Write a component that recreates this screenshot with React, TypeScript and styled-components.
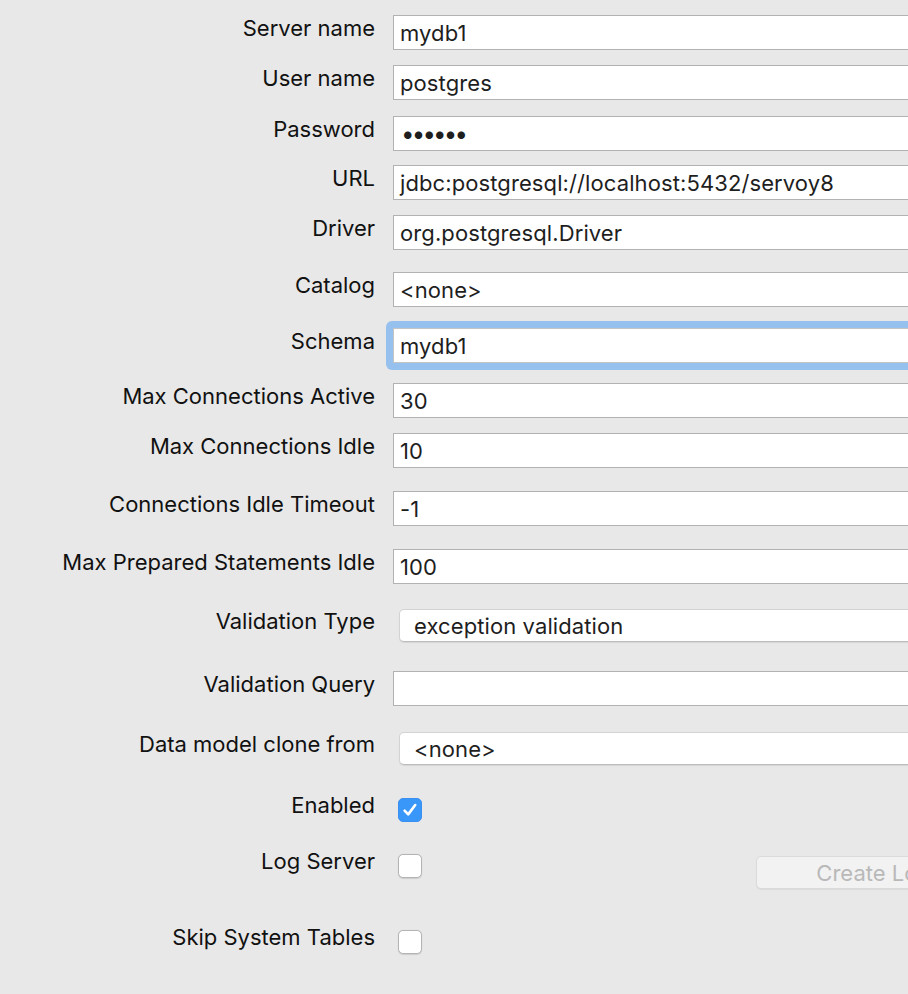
import React from 'react';
import styled, { createGlobalStyle } from 'styled-components';

const GlobalStyle = createGlobalStyle`
  html, body {
    margin: 0;
    padding: 0;
    background: #e8e8e8;
    overflow: hidden;
  }
  body {
    font-family: Inter, "Liberation Sans", Arial, sans-serif;
  }
`;

const Page = styled.div`
  width: 908px;
  height: 994px;
  overflow: hidden;
  background: #e8e8e8;
`;

const Form = styled.div`
  display: flex;
  flex-direction: column;
  padding-top: 15px;
`;

const Row = styled.div<{ $mt: number }>`
  display: grid;
  grid-template-columns: 375px 1fr;
  column-gap: 18px;
  align-items: center;
  margin-top: ${p => p.$mt}px;
`;

// labels sit a few pixels above the centre of their control
const Label = styled.div`
  text-align: right;
  font-size: 22px;
  line-height: 24px;
  color: #111;
  white-space: nowrap;
  margin-top: -5px;
  margin-bottom: 5px;
`;

const TextField = styled.div<{ $focused?: boolean }>`
  position: relative;
  width: 640px;
  height: 35px;
  box-sizing: border-box;
  background: #fff;
  border: 1px solid ${p => (p.$focused ? '#c4c4c4' : '#b2b2b2')};
  display: flex;
  align-items: center;
  padding-left: 6px;
  font-size: 22px;
  color: #1e1e1e;
  white-space: nowrap;
  letter-spacing: 0.1px;

  ${p =>
    p.$focused &&
    `
    &::before {
      content: '';
      position: absolute;
      inset: -8px;
      border-radius: 6px;
      background: #96c0ee;
      z-index: -1;
    }
  `}
`;

const FocusWrap = styled.div`
  position: relative;
  z-index: 0;
`;

const Dots = styled.span`
  font-size: 24px;
  letter-spacing: -2.8px;
  padding-left: 1px;
`;

const Combo = styled.div`
  width: 620px;
  height: 33px;
  margin-left: 6px;
  box-sizing: border-box;
  background: #fff;
  border: 1px solid #d3d3d3;
  border-bottom-color: #bcbcbc;
  border-radius: 5px;
  box-shadow: 0 1px 1px rgba(0, 0, 0, 0.08);
  display: flex;
  align-items: center;
  padding-left: 14px;
  font-size: 22px;
  color: #1e1e1e;
  white-space: nowrap;
  letter-spacing: 0.1px;
`;

const CheckCell = styled.div`
  height: 24px;
  display: flex;
  align-items: flex-start;
`;

const Checkbox = styled.div<{ $checked?: boolean }>`
  width: 24px;
  height: 24px;
  margin-left: 5px;
  box-sizing: border-box;
  border-radius: 5px;
  flex-shrink: 0;
  display: flex;
  align-items: center;
  justify-content: center;
  background: ${p => (p.$checked ? '#3a97fa' : '#fff')};
  border: 1px solid ${p => (p.$checked ? '#3a8ff0' : '#b4b4b4')};
  box-shadow: ${p => (p.$checked ? 'none' : '0 0.5px 1px rgba(0,0,0,0.12)')};
`;

const Button = styled.div`
  margin-left: 334px;
  margin-top: 2px;
  width: 298px;
  height: 33px;
  flex-shrink: 0;
  box-sizing: border-box;
  border-radius: 5px;
  background: #f2f2f2;
  border: 1px solid #dadada;
  box-shadow: 0 1px 1px rgba(0, 0, 0, 0.06);
  display: flex;
  align-items: center;
  justify-content: center;
  font-size: 22px;
  color: #b9b9b9;
  white-space: nowrap;
`;

const Check = () => (
  <svg width="18" height="18" viewBox="0 0 18 18">
    <path
      d="M3.6 9.6 L7.2 13.4 L14.2 4"
      fill="none"
      stroke="#fff"
      strokeWidth="2.6"
      strokeLinecap="round"
      strokeLinejoin="round"
    />
  </svg>
);

export default function App() {
  return (
    <Page>
      <GlobalStyle />
      <Form>
        <Row $mt={0}>
          <Label>Server name</Label>
          <TextField>mydb1</TextField>
        </Row>
        <Row $mt={15}>
          <Label>User name</Label>
          <TextField>postgres</TextField>
        </Row>
        <Row $mt={16}>
          <Label>Password</Label>
          <TextField>
            <Dots>••••••</Dots>
          </TextField>
        </Row>
        <Row $mt={14}>
          <Label>URL</Label>
          <TextField>jdbc:postgresql://localhost:5432/servoy8</TextField>
        </Row>
        <Row $mt={15}>
          <Label>Driver</Label>
          <TextField>org.postgresql.Driver</TextField>
        </Row>
        <Row $mt={22}>
          <Label>Catalog</Label>
          <TextField>&lt;none&gt;</TextField>
        </Row>
        <Row $mt={21}>
          <Label>Schema</Label>
          <FocusWrap>
            <TextField $focused>mydb1</TextField>
          </FocusWrap>
        </Row>
        <Row $mt={20}>
          <Label>Max Connections Active</Label>
          <TextField>30</TextField>
        </Row>
        <Row $mt={15}>
          <Label>Max Connections Idle</Label>
          <TextField>10</TextField>
        </Row>
        <Row $mt={23}>
          <Label>Connections Idle Timeout</Label>
          <TextField>-1</TextField>
        </Row>
        <Row $mt={23}>
          <Label>Max Prepared Statements Idle</Label>
          <TextField>100</TextField>
        </Row>
        <Row $mt={25}>
          <Label>Validation Type</Label>
          <Combo>exception validation</Combo>
        </Row>
        <Row $mt={29}>
          <Label>Validation Query</Label>
          <TextField />
        </Row>
        <Row $mt={26}>
          <Label>Data model clone from</Label>
          <Combo>&lt;none&gt;</Combo>
        </Row>
        <Row $mt={33}>
          <Label>Enabled</Label>
          <CheckCell>
            <Checkbox $checked>
              <Check />
            </Checkbox>
          </CheckCell>
        </Row>
        <Row $mt={32}>
          <Label>Log Server</Label>
          <CheckCell>
            <Checkbox />
            <Button>Create Log Table</Button>
          </CheckCell>
        </Row>
        <Row $mt={52}>
          <Label>Skip System Tables</Label>
          <CheckCell>
            <Checkbox />
          </CheckCell>
        </Row>
      </Form>
    </Page>
  );
}
